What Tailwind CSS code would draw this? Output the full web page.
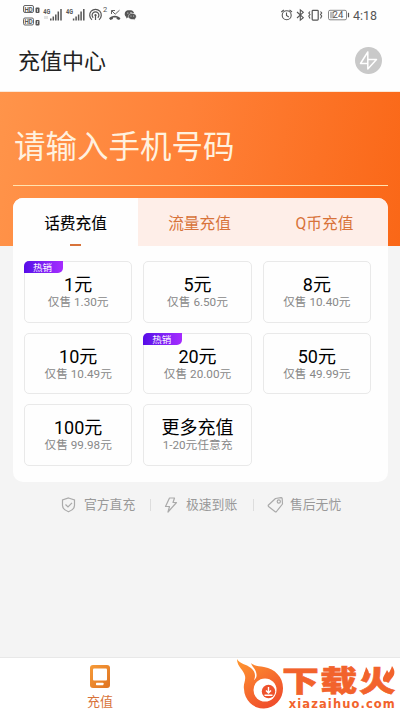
<!DOCTYPE html>
<html lang="zh-CN">
<head>
<meta charset="utf-8">
<title>充值中心</title>
<script src="https://cdn.jsdelivr.net/npm/@tailwindcss/browser@4"></script>
</head>
<body class="bg-[#f4f4f4]">
<div class="relative w-[400px] h-[711px] overflow-hidden flex flex-col font-[Roboto,'Noto_Sans_CJK_SC',sans-serif] text-black">
  <!-- status bar -->
  <div class="h-[30px] shrink-0 bg-[#fefefe] flex justify-between pl-[23px] pr-[23px] text-[#555]">
    <svg width="116" height="30" viewBox="23 0 116 30" fill="none" stroke="#555" font-family="Roboto, sans-serif">
      <g stroke-width=".9"><rect x="23.5" y="5.5" width="10" height="7" rx="1.5"/><rect x="23.5" y="18" width="10" height="7" rx="1.5"/></g>
      <g fill="#555" stroke="none" font-weight="700">
        <text x="24.4" y="11.6" font-size="6.8" textLength="8.3" lengthAdjust="spacingAndGlyphs">HD</text><text x="24.4" y="24.1" font-size="6.8" textLength="8.3" lengthAdjust="spacingAndGlyphs">HD</text>
        <rect x="35.5" y="7.5" width="4" height="5.5" rx="1"/><rect x="35.5" y="20" width="4" height="5.5" rx="1"/>
        <text x="43.3" y="13.8" font-size="7" textLength="7" lengthAdjust="spacingAndGlyphs">4G</text><text x="66" y="13.8" font-size="7" textLength="7" lengthAdjust="spacingAndGlyphs">4G</text>
        <text x="103" y="12.300" font-size="7.500" font-weight="400">2</text>
      </g>
      <path d="M37.5 9v3M37 21.5h1l-1 2h1" stroke="#fff" stroke-width=".7"/>
      <path d="M45 16v3M47 16v3" stroke="#bbb" stroke-width=".8"/>
      <path d="M50.800 20.500v-2M53.300 20.500v-4M55.800 20.500v-6M58.300 20.500v-9M61 20.500V9M73.600 20.500v-2M76.100 20.500v-4M78.600 20.500v-6M81.100 20.500v-9M83.800 20.500V9" stroke-width="1.500"/>
      <path d="M92 19.700A5.800 5.800 0 1 1 99 19.700M93.200 17.700A3.400 3.400 0 1 1 97.800 17.700" stroke-width="1.200"/><circle cx="95.500" cy="15.200" r="1.100" fill="#555" stroke="none"/><path d="M95.500 15v5" stroke-width="1.200"/>
      <path d="M111.500 14V10.500h3.500M111.800 10.800l3.400 3.400 4.300-4" stroke-width=".9"/><path d="M109 18.300c2.800-3.400 8.700-3.400 11.500 0l-1.400 1.800-2.500-1.200v-1.300h-3.700v1.300l-2.500 1.200z" fill="#555" stroke="none"/>
      <path d="M129.500 10c-2.800 0-4.800 1.700-4.800 3.900 0 1.300.7 2.300 1.700 3l-.4 1.500 1.800-.9 1.300.2c0-2.800 2-4.500 5-4.600-.5-1.800-2.300-3.100-4.600-3.100z" fill="#555" stroke="none"/>
      <path d="M132.300 13.300c2.200 0 4 1.400 4 3.200 0 1-.6 1.900-1.500 2.500l.3 1.200-1.400-.7c-3 .5-5.300-.9-5.300-3s1.700-3.200 3.900-3.200z" fill="#555" stroke="#fefefe" stroke-width=".5"/>
      <g fill="#fff" stroke="none"><circle cx="127.800" cy="13" r=".6"/><circle cx="131" cy="12.500" r=".6"/><circle cx="131" cy="16" r=".5"/><circle cx="133.700" cy="16" r=".5"/></g>
    </svg>
    <svg width="97" height="30" viewBox="280 0 97 30" fill="none" stroke="#555" font-family="Roboto, sans-serif">
      <circle cx="286.700" cy="15.300" r="4.500" stroke-width="1.100"/><path d="M286.500 12.500v3l2.300 1.500M281.300 12l2.500-2M292 12l-2.500-2" stroke-width="1.100"/>
      <path d="M297 12l6.300 5.700-3 2.500V9.800l3 2.500L297 18" stroke-width="1.100"/>
      <rect x="312.200" y="10.300" width="6" height="9.800" rx=".8" stroke-width="1.200"/><path d="M310 11.500l-1.200 1.500 1.200 1.500-1.200 1.500 1.200 2.500M320.500 11.500l1.200 1.500-1.200 1.500 1.200 1.500-1.200 2.500" stroke-width="1.100"/>
      <rect x="328.500" y="10.300" width="18" height="9.500" rx="1.500" stroke="#888"/><rect x="330" y="11.800" width="4" height="6.500" fill="#bbb" stroke="none"/><path d="M348.500 12.800v4.500" stroke-width="1.200"/>
      <text x="332.500" y="18" font-size="8.500" fill="#555" stroke="none" textLength="10.800" lengthAdjust="spacingAndGlyphs">24</text>
      <text x="353" y="19.700" font-size="12.500" fill="#555" stroke="none" textLength="24" lengthAdjust="spacingAndGlyphs">4:18</text>
    </svg>
  </div>
  <!-- title bar -->
  <header class="h-[62px] shrink-0 bg-[#fefefe] flex items-center justify-between pl-[18px] pr-[18px] border-b border-[#fbe9d9]">
    <h1 class="text-[22px] leading-[28px] pt-[2px] font-normal text-[#222]">充值中心</h1>
    <svg width="27" height="27" viewBox="0 0 27 27" fill="none"><circle cx="13.500" cy="13.500" r="13.500" fill="#c9c9c9"/><path d="M13.500 16.500H5.500L12.800 5V22L21.500 12.500h-8" stroke="#fff" stroke-width="1.500" stroke-linejoin="round"/></svg>
  </header>
  <!-- phone number and products -->
  <main class="shrink-0 h-[390px] px-[13px] pr-[12px] bg-[linear-gradient(100deg,#ff944a_0%,#ff8138_45%,#fa6717_100%)] bg-[length:100%_154px] bg-no-repeat">
    <div class="h-[94px] border-b border-[#ffe3b0] pt-[34px] pl-px text-[31.500px] leading-[44px] text-[#fff1df]">请输入手机号码</div>
    <section class="mt-[12px] h-[284px] rounded-[10px] bg-[#fefefe] overflow-hidden">
      <nav class="h-[48px] grid grid-cols-3 text-[15.700px] leading-[20px] text-center text-[#d8733a] bg-[#feeee8]">
        <div class="relative bg-[#fefefe] text-black pt-[16px] [-webkit-text-stroke:0.100px_#000]">话费充值<span class="absolute left-[57px] top-[46px] w-[11px] h-[2px] bg-[#d8733a]"></span></div>
        <div class="pt-[16px] pr-[2px]">流量充值</div>
        <div class="pt-[16px] pr-[2px]">Q币充值</div>
      </nav>
      <div class="pt-[15px] px-[11px] pr-[17px] grid grid-cols-3 gap-x-[11px] gap-y-[10px] text-center text-[18px] leading-[20px] [&>div]:h-[61.500px] [&>div]:border [&>div]:border-[#e9e9e9] [&>div]:rounded-[5px] [&>div]:pt-[13px] [&_p]:text-[11.700px] [&_p]:leading-[15px] [&_p]:text-[#888]">
        <div class="relative">1元<p>仅售 1.30元</p><span class="absolute -left-px -top-px w-[39px] h-[12px] rounded-tl-[5px] rounded-br-[5px] bg-linear-to-r from-[#5709e8] to-[#a62bff] text-white text-[9.500px] leading-[14px] pr-[2px]">热销</span></div>
        <div>5元<p>仅售 6.50元</p></div>
        <div>8元<p>仅售 10.40元</p></div>
        <div>10元<p>仅售 10.49元</p></div>
        <div class="relative">20元<p>仅售 20.00元</p><span class="absolute -left-px -top-px w-[39px] h-[12px] rounded-tl-[5px] rounded-br-[5px] bg-linear-to-r from-[#5709e8] to-[#a62bff] text-white text-[9.500px] leading-[14px] pr-[2px]">热销</span></div>
        <div>50元<p>仅售 49.99元</p></div>
        <div>100元<p>仅售 99.98元</p></div>
        <div>更多充值<p>1-20元任意充</p></div>
      </div>
    </section>
  </main>
  <!-- guarantees -->
  <div class="h-[46px] shrink-0 flex items-center pl-[61px] text-[12.800px] text-[#999]">
    <svg width="15" height="16" viewBox="0 0 15 16" fill="none" stroke="#aaa" stroke-width="1.200"><path d="M7.500 1l6 2v5.500c0 3-2.500 5-6 6.300C4 13.500 1.500 11.500 1.500 8.500V3z"/><path d="M4.500 7.500L7 10l4-4.200"/></svg>
    <span class="ml-[8px] w-[52px] whitespace-nowrap">官方直充</span>
    <i class="ml-[14px] w-px h-[12px] bg-[#ddd]"></i>
    <svg class="ml-[13px]" width="14" height="16" viewBox="0 0 14 16" fill="none" stroke="#aaa" stroke-width="1.200" stroke-linejoin="round"><path d="M5.500 1h5L9 5.500h3.500L4 15l1.500-5.500H1.500z"/></svg>
    <span class="ml-[8px] w-[52px] whitespace-nowrap">极速到账</span>
    <i class="ml-[15px] w-px h-[12px] bg-[#ddd]"></i>
    <svg class="ml-[13px]" width="18" height="18" viewBox="0 0 18 18" fill="none" stroke="#aaa" stroke-width="1.200" stroke-linejoin="round"><path d="M8.500 2.500l5.500-.8q1 0 1.200 1l.3 5.300-6 7.500q-.8.700-1.600 0L1.500 10.500q-.6-.8 0-1.500z"/><circle cx="11.800" cy="5.500" r="1.600"/></svg>
    <span class="ml-[5px] whitespace-nowrap">售后无忧</span>
  </div>
  <!-- bottom navigation -->
  <nav class="mt-auto h-[54px] shrink-0 bg-white border-t border-[#e8e8e8] pt-[7px]">
    <div class="w-[200px] flex flex-col items-center text-[13px] leading-[16px] text-[#d8733a]">
      <svg width="20" height="24" viewBox="0 0 20 24"><defs><linearGradient id="ph" x2="1" y2="1"><stop stop-color="#f69b38"/><stop offset="1" stop-color="#df7322"/></linearGradient></defs><rect width="20" height="23" rx="3" fill="url(#ph)"/><rect x="3" y="3.500" width="14" height="12" rx="1" fill="#fff"/><rect x="6" y="17.700" width="7.500" height="2.500" rx=".6" fill="#fff"/></svg>
      <span class="mt-[5px]">充值</span>
    </div>
  </nav>
  <!-- site mark -->
  <svg class="absolute left-[232px] top-[656px]" width="168" height="55" viewBox="232 656 168 55">
    <defs><linearGradient id="fl" x1="0" y1="0" x2=".6" y2="1"><stop stop-color="#ff9830"/><stop offset="1" stop-color="#f0502c"/></linearGradient></defs>
    <path d="M237 659c3 5 9 5 14 9 4 3 5 8 3 12 3-2 3-5 2-8-1-4-4-5-5-9 3 3 8 3 13 4 11 2 19 10 19 21a19.500 20 0 0 1-39 1c-1-5 2-8 1-13-1-6-8-9-8-17z" fill="url(#fl)"/>
    <circle cx="265" cy="690" r="11.500" fill="#fff"/><circle cx="268.500" cy="691.500" r="6.700" fill="#ee512b"/>
    <path d="M268.500 687v6m-2.500-2.500l2.500 2.500 2.500-2.500M264.500 695.300h8" stroke="#fff" stroke-width="1.400" fill="none"/>
    <g fill="#f2632c" stroke="#f2632c">
      <g transform="translate(282 691.500) scale(1.120 .88)" font-family="'Noto Sans CJK SC', sans-serif" font-weight="900" font-size="33" stroke-width=".6"><text x="0" y="0" textLength="101.500">下载火</text></g>
      <text x="288.800" y="707.500" font-family="'DejaVu Sans', sans-serif" font-weight="700" font-size="11.500" stroke="none" textLength="106">xiazaihuo.com</text>
      <path d="M366 667c3 4 5 8 0 13-5-3-1-7 0-13zM392 666c4 5 3 11-3 14-4-4 1-7 3-14zM387 670c3 4 2 9-3 12-3-4 1-7 3-12z" stroke="none"/>
    </g>
  </svg>
</div>
</body>
</html>
